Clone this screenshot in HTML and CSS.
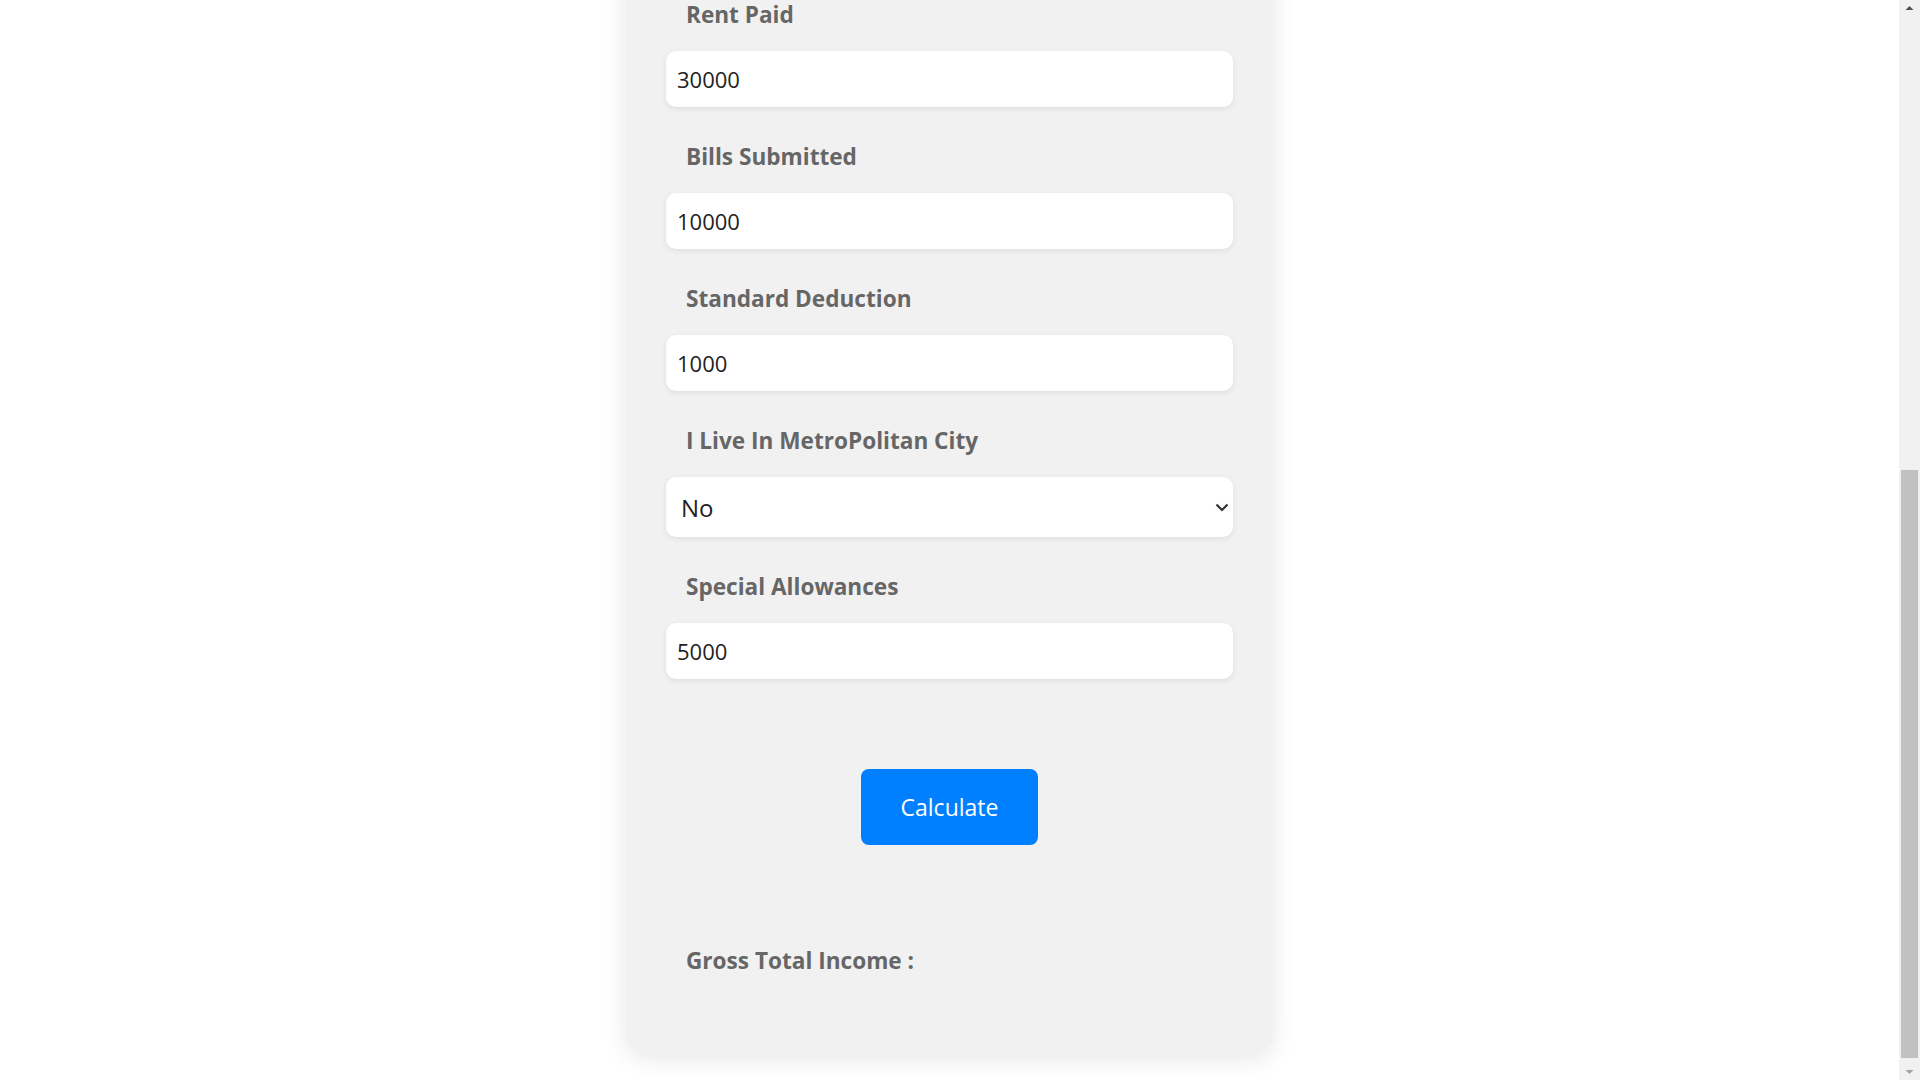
FILE: index.html
```html
<!DOCTYPE html>
<html lang="en">
<head>
<meta charset="utf-8">
<title>Salary Calculator</title>
<link rel="stylesheet" href="styles.css">
</head>
<body>
<div class="page">
  <form class="card" onsubmit="return false;">
    <h1 class="title">Salary Calculator</h1>
    <div class="field">
      <label class="label" for="basic">Basic Salary</label>
      <input class="control" id="basic" type="text" value="50000">
    </div>
    <div class="field">
      <label class="label" for="da">Dearness Allowance</label>
      <input class="control" id="da" type="text" value="5000">
    </div>
    <div class="field">
      <label class="label" for="hra">HRA Received</label>
      <input class="control" id="hra" type="text" value="20000">
    </div>
    <div class="field">
      <label class="label" for="lta">Leave Travel Allowance</label>
      <input class="control" id="lta" type="text" value="2000">
    </div>
    <div class="field">
      <label class="label" for="conv">Conveyance Allowance</label>
      <input class="control" id="conv" type="text" value="1600">
    </div>
    <div class="field">
      <label class="label" for="rent">Rent Paid</label>
      <input class="control" id="rent" type="text" value="30000">
    </div>
    <div class="field">
      <label class="label" for="bills">Bills Submitted</label>
      <input class="control" id="bills" type="text" value="10000">
    </div>
    <div class="field">
      <label class="label" for="std">Standard Deduction</label>
      <input class="control" id="std" type="text" value="1000">
    </div>
    <div class="field">
      <label class="label" for="metro">I Live In MetroPolitan City</label>
      <div class="select-wrap">
        <select class="control select" id="metro">
          <option>No</option>
          <option>Yes</option>
        </select>
        <svg class="chevron" width="14" height="9" viewBox="0 0 14 9" aria-hidden="true"><path d="M1.5 1.5 L7 7 L12.5 1.5" fill="none" stroke="#333333" stroke-width="2.2"/></svg>
      </div>
    </div>
    <div class="field">
      <label class="label" for="special">Special Allowances</label>
      <input class="control" id="special" type="text" value="5000">
    </div>
    <div class="actions">
      <button class="btn" type="button">Calculate</button>
    </div>
    <div class="result">Gross Total Income : <span class="result-value"></span></div>
  </form>
</div>
<div class="scrollbar" aria-hidden="true">
  <div class="sb-btn sb-up">
    <svg width="21" height="17" viewBox="0 0 21 17"><path d="M6.5 10 L10.5 6 L14.5 10 Z" fill="#505050"/></svg>
  </div>
  <div class="sb-track">
    <div class="sb-thumb"></div>
  </div>
  <div class="sb-btn sb-down">
    <svg width="21" height="17" viewBox="0 0 21 17"><path d="M6.5 7 L10.5 11 L14.5 7 Z" fill="#a3a3a3"/></svg>
  </div>
</div>
<script src="script.js"></script>
</body>
</html>
```

FILE: styles.css
```css
html {
  scroll-behavior: auto;
}

body {
  margin: 0;
  background: #ffffff;
  font-family: "Open Sans", "Noto Sans", "Liberation Sans", sans-serif;
  color: #222222;
}

.page {
  padding: 16px 21px 27px 0;
}

.card {
  width: 647px;
  box-sizing: border-box;
  margin: 0 auto;
  padding: 40px 40px 77px;
  background: #f1f1f1;
  border-radius: 20px;
  box-shadow: 0 5px 25px rgba(0, 0, 0, 0.1);
}

.title {
  margin: 0;
  font-size: 30px;
  line-height: 40px;
  text-align: center;
  color: #444444;
}

.field {
  display: flex;
  flex-direction: column;
}

.label {
  display: block;
  margin: 35px 0 21px;
  padding-left: 20px;
  font-size: 22.6px;
  line-height: 30px;
  font-weight: 700;
  color: #666666;
}

.control {
  box-sizing: border-box;
  width: 100%;
  height: 56px;
  margin: 0;
  padding: 0 11px;
  border: none;
  border-radius: 10px;
  background: #ffffff;
  box-shadow: 0 2px 6px rgba(0, 0, 0, 0.08);
  font-family: "Open Sans", "Noto Sans", "Liberation Sans", sans-serif;
  font-size: 22px;
  color: #222222;
  outline: none;
}

.select-wrap {
  position: relative;
}

.select {
  display: block;
  height: 60px;
  padding: 0 30px 0 15px;
  font-size: 24px;
  -webkit-appearance: none;
  appearance: none;
}

.chevron {
  position: absolute;
  right: 4px;
  top: 26px;
  pointer-events: none;
}

.actions {
  display: flex;
  justify-content: center;
  margin-top: 90px;
}

.btn {
  width: 177px;
  height: 76px;
  padding: 0;
  border: none;
  border-radius: 8px;
  background: #007fff;
  color: #ffffff;
  font-family: "Open Sans", "Noto Sans", "Liberation Sans", sans-serif;
  font-size: 23px;
  line-height: 30px;
  cursor: pointer;
}

.result {
  margin-top: 101px;
  padding-left: 20px;
  font-size: 22.6px;
  line-height: 30px;
  font-weight: 700;
  color: #666666;
}

/* window scrollbar overlay */
.scrollbar {
  position: fixed;
  top: 0;
  right: 0;
  width: 21px;
  height: 100vh;
  display: flex;
  flex-direction: column;
  background: #f1f1f1;
}

.sb-btn {
  height: 17px;
  flex: none;
}

.sb-btn svg {
  display: block;
}

.sb-track {
  flex: 1;
  display: flex;
  flex-direction: column;
  justify-content: flex-end;
  padding: 0 2px 5px;
}

.sb-thumb {
  height: 588px;
  background: #c1c1c1;
}
```

FILE: script.js
```js
function scrollToBottom() {
  window.scrollTo(0, document.documentElement.scrollHeight);
}
scrollToBottom();
window.addEventListener('load', scrollToBottom);
```
